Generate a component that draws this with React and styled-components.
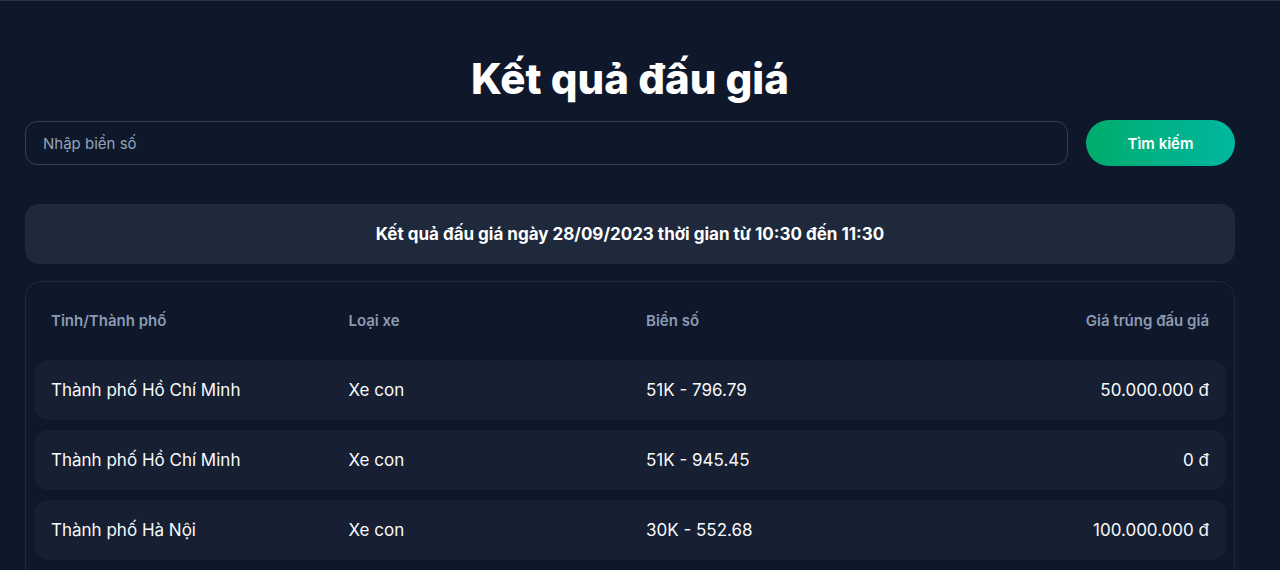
import React from 'react';
import styled, { createGlobalStyle } from 'styled-components';

const GlobalStyle = createGlobalStyle`
  * {
    box-sizing: border-box;
  }
  body {
    margin: 0;
    background: #0f172a;
    color: #f1f5f9;
    font-family: Inter, "Noto Sans", sans-serif;
  }
`;

const Page = styled.div`
  min-height: 570px;
  border-top: 1px solid #2b3547;
  padding: 0 45px 10px 25px;
`;

const Title = styled.h1`
  margin: 0;
  padding-top: 52px;
  height: 119px;
  text-align: center;
  font-size: 42px;
  font-weight: 800;
  line-height: 52px;
  color: #ffffff;
`;

const SearchBar = styled.form`
  display: flex;
  align-items: center;
  gap: 18px;
  margin-bottom: 38px;
`;

const SearchInput = styled.input`
  flex: 1;
  height: 44px;
  padding: 0 17px;
  border: 1px solid #334155;
  border-radius: 12px;
  background: #0f172a;
  color: #f1f5f9;
  font-family: inherit;
  font-size: 15px;
  outline: none;

  &::placeholder {
    color: #94a3b8;
  }
`;

const SearchButton = styled.button`
  width: 149px;
  height: 46px;
  border: none;
  border-radius: 999px;
  background: linear-gradient(90deg, #00ac6c 0%, #00b7a0 100%);
  color: #ffffff;
  font-family: inherit;
  font-size: 15px;
  font-weight: 600;
  cursor: pointer;
`;

const Banner = styled.div`
  height: 60px;
  display: flex;
  align-items: center;
  justify-content: center;
  border-radius: 14px;
  background: #1e293b;
  font-size: 17px;
  font-weight: 700;
  color: #ffffff;
  margin-bottom: 17px;
`;

const TableCard = styled.div`
  border: 1px solid #1e293b;
  border-radius: 16px;
  padding: 8px 8px 24px;
  display: flex;
  flex-direction: column;
  gap: 10px;
`;

const Row = styled.div`
  display: grid;
  grid-template-columns: repeat(4, 1fr);
  column-gap: 32px;
  align-items: center;
  height: 60px;
  padding: 0 17px;
  border-radius: 14px;
  background: ${(p) => (p.$head ? 'transparent' : '#172032')};
`;

const Cell = styled.div`
  font-size: ${(p) => (p.$head ? '15px' : '17px')};
  font-weight: ${(p) => (p.$head ? 600 : 400)};
  color: ${(p) => (p.$head ? '#8b9ab3' : '#f8fafc')};
  text-align: ${(p) => (p.$right ? 'right' : 'left')};
  white-space: nowrap;
`;

const results = [
  { city: 'Thành phố Hồ Chí Minh', type: 'Xe con', plate: '51K - 796.79', price: '50.000.000 đ' },
  { city: 'Thành phố Hồ Chí Minh', type: 'Xe con', plate: '51K - 945.45', price: '0 đ' },
  { city: 'Thành phố Hà Nội', type: 'Xe con', plate: '30K - 552.68', price: '100.000.000 đ' },
];

const App = () => (
  <Page>
    <GlobalStyle />
    <Title>Kết quả đấu giá</Title>
    <SearchBar onSubmit={(e) => e.preventDefault()}>
      <SearchInput placeholder="Nhập biển số" />
      <SearchButton type="submit">Tìm kiếm</SearchButton>
    </SearchBar>
    <Banner>Kết quả đấu giá ngày 28/09/2023 thời gian từ 10:30 đến 11:30</Banner>
    <TableCard>
      <Row $head>
        <Cell $head>Tỉnh/Thành phố</Cell>
        <Cell $head>Loại xe</Cell>
        <Cell $head>Biển số</Cell>
        <Cell $head $right>Giá trúng đấu giá</Cell>
      </Row>
      {results.map((r) => (
        <Row key={r.plate}>
          <Cell>{r.city}</Cell>
          <Cell>{r.type}</Cell>
          <Cell>{r.plate}</Cell>
          <Cell $right>{r.price}</Cell>
        </Row>
      ))}
    </TableCard>
  </Page>
);

export default App;
